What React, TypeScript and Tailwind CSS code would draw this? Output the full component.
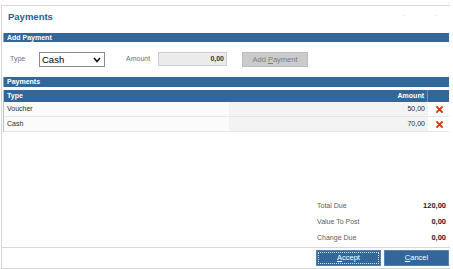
import React from "react";

const F = { fontFamily: '"Liberation Sans", Arial, sans-serif' };

function RedX() {
  return (
    <svg width="7" height="7" viewBox="0 0 7 7">
      <path d="M1 1 L6 6 M6 1 L1 6" stroke="#dc3514" strokeWidth="1.8" strokeLinecap="square" />
    </svg>
  );
}

export default function App() {
  const rows = [
    { type: "Voucher", amount: "50,00" },
    { type: "Cash", amount: "70,00" },
  ];
  return (
    <div className="w-[453px] h-[269px] bg-white overflow-hidden pt-[5px]" style={F}>
      <div className="ml-[1px] w-[449px] h-[264px] border-t border-l border-[#d6d6d6] flex flex-col">
        {/* Title */}
        <div className="h-[27px] pt-[5px] pl-[6px] relative">
          <div className="text-[9.5px] leading-[11px] font-bold text-[#2d5c8e]">Payments</div>
          <div className="absolute top-[9px] left-[401px] w-[1px] h-[1px] bg-[#dde4ec]" />
          <div className="absolute top-[9px] left-[433px] w-[1px] h-[1px] bg-[#dde4ec]" />
        </div>

        {/* Add Payment bar */}
        <div className="mx-[1px] h-[9px] bg-[#336699] border-l border-[#8aa6c4] pl-[3px] text-[7px] leading-[9px] font-bold text-white">
          Add Payment
        </div>

        {/* Type row */}
        <div className="h-[35px] pt-[10px] pl-[8px] flex items-start">
          <div className="w-[29px] h-[15px] flex items-center text-[7px] text-[#6f6f6f]">Type</div>
          <div className="w-[66px] h-[15px] border border-[#8a8a8a] bg-white flex items-center justify-between pl-[2px] pr-[3px]">
            <span className="text-[9.5px] leading-[13px] text-black">Cash</span>
            <svg width="8" height="6" viewBox="0 0 8 6">
              <path d="M1 1 L4 4.5 L7 1" stroke="#111" strokeWidth="1.6" fill="none" />
            </svg>
          </div>
          <div className="ml-[21px] w-[32px] h-[15px] flex items-center text-[7px] text-[#6f6f6f]">Amount</div>
          <div className="w-[69px] h-[14px] border border-[#cfcfcf] bg-[#ebebeb] flex items-center justify-end pr-[2px] text-[7px] font-bold text-[#333]">
            0,00
          </div>
          <div className="ml-[15px] w-[66px] h-[15px] bg-[#cbcbcb] border border-[#bdbdbd] flex items-center justify-center text-[7.5px] text-[#7d7d7d]">
            Add&nbsp;<span className="underline">P</span>ayment
          </div>
        </div>

        {/* Payments bar */}
        <div className="mx-[1px] h-[10px] bg-[#336699] border-l border-[#8aa6c4] pl-[3px] text-[7px] leading-[10px] font-bold text-white">
          Payments
        </div>

        {/* Table */}
        <div className="mt-[3px] mx-[1px] border-l border-[#b5c3d3]">
          <div className="h-[12px] bg-[#336699] flex text-[7px] font-bold text-white leading-[12px]">
            <div className="w-[225px] pl-[3px]">Type</div>
            <div className="w-[199px] pr-[3px] text-right border-r border-[#6d8fb3]">Amount</div>
            <div className="flex-1" />
          </div>
          {rows.map((r) => (
            <div key={r.type} className="h-[15px] flex text-[7px] text-[#2a2a2a] border-b border-[#e6e6e6]">
              <div className="w-[225px] pl-[3px] bg-[#fbfbfb] flex items-center">{r.type}</div>
              <div className="w-[199px] pr-[3px] bg-[#f3f3f3] flex items-center justify-end">{r.amount}</div>
              <div className="flex-1 flex items-center justify-center pl-[1px] pt-[1px] bg-white">
                <RedX />
              </div>
            </div>
          ))}
        </div>

        {/* Totals */}
        <div className="flex-1 flex flex-col justify-end pb-[1px]">
          {[
            ["Total Due", "120,00"],
            ["Value To Post", "0,00"],
            ["Change Due", "0,00"],
          ].map(([l, v]) => (
            <div key={l} className="h-[16px] flex items-center pl-[315px] pr-[4px]">
              <span className="flex-1 text-[7px] text-[#5e5e5e]">{l}</span>
              <span className="text-[7.5px] font-bold text-[#1e1e1e]">{v}</span>
            </div>
          ))}
        </div>

        {/* Footer */}
        <div className="h-[22px] border-t border-b border-[#d6d6d6] flex justify-end items-start pt-[2px] pr-[1px] gap-[3px]">
          <div className="w-[65px] h-[16px] bg-[#336699] border border-[#5a82ad] p-[1px]">
            <div className="w-full h-full border border-dotted border-white/80 flex items-center justify-center text-[7.5px] text-white">
              <span className="underline">A</span>ccept
            </div>
          </div>
          <div className="w-[65px] h-[16px] bg-[#336699] border border-[#5a82ad] flex items-center justify-center text-[7.5px] text-white">
            <span className="underline">C</span>ancel
          </div>
        </div>
      </div>
    </div>
  );
}
